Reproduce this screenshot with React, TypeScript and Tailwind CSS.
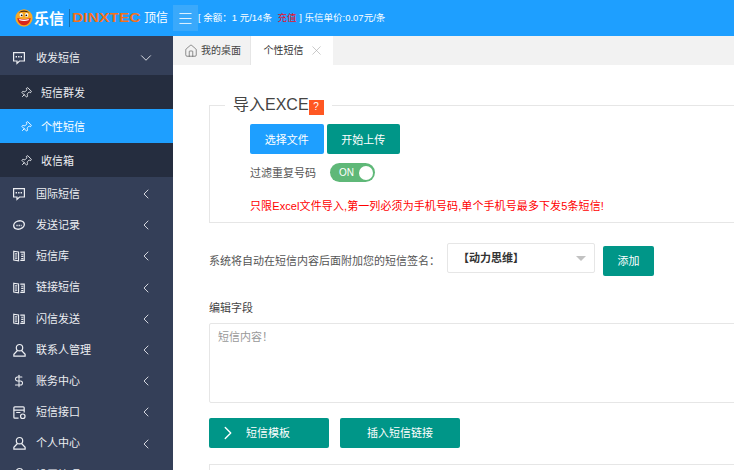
import { ChevronDown, ChevronLeft, ChevronRight, DollarSign, House, Menu, Pin, X } from 'lucide-react'
import type { ReactNode } from 'react'

const font = "font-['Liberation_Sans','Noto_Sans_CJK_SC',sans-serif]"

const MsgIcon = () => (
  <svg viewBox="0 0 14 14" className="h-[14px] w-[14px]" fill="none" stroke="currentColor" strokeWidth="1.2">
    <path d="M1.6 1.6 H12.4 V10 H7.5 L5 12.4 V10 H1.6 Z" />
    <path d="M3.6 5.8 H10.4" strokeWidth="1.5" strokeDasharray="1.4 1.1" />
  </svg>
)

const BookIcon = () => (
  <svg viewBox="0 0 16 16" className="h-[14px] w-[14px]" fill="none" stroke="currentColor" strokeWidth="1.3">
    <path d="M2 2.5 L7.5 3.5 V13.5 L2 12.5 Z" />
    <path d="M9.5 3.5 H14 V13 H9.5" />
    <path d="M3.5 5.5 H6 M3.5 8 H6 M3.5 10.5 H6 M10.5 6 H13 M10.5 8.5 H13 M10.5 11 H13" />
  </svg>
)

const OrbitIcon = () => (
  <svg viewBox="0 0 16 16" className="h-[14px] w-[14px]" fill="none" stroke="currentColor" strokeWidth="1.6">
    <ellipse cx="8" cy="8" rx="6.2" ry="4.6" transform="rotate(-18 8 8)" />
    <path d="M5 8.6 H11" strokeWidth="1.6" strokeDasharray="1.5 1" />
  </svg>
)

const ApiIcon = () => (
  <svg viewBox="0 0 16 16" className="h-[15px] w-[15px]" fill="none" stroke="currentColor" strokeWidth="1.3">
    <path d="M7 14 H3 a1 1 0 0 1 -1 -1 V3 a1 1 0 0 1 1 -1 H12 a1 1 0 0 1 1 1 V8" />
    <path d="M2 5.5 H13 M4.5 8 H9" />
    <circle cx="11.5" cy="12" r="2.4" />
  </svg>
)

const UserIcon = () => (
  <svg viewBox="0 0 16 16" className="h-[15px] w-[15px]" fill="none" stroke="currentColor" strokeWidth="1.3">
    <circle cx="8" cy="5" r="3.4" />
    <path d="M5.8 8 L2 12 V14 H14 V12 L10.2 8" />
  </svg>
)

const Logo = () => (
  <svg viewBox="0 0 20 20" className="h-[18px] w-[18px] shrink-0">
    <circle cx="10" cy="10" r="9.6" fill="#f7a823" />
    <path d="M4 4.2 A8.6 8.6 0 0 1 16 4.2 Q10 1.8 4 4.2 Z" fill="#4a2a10" />
    <ellipse cx="7" cy="6.6" rx="1.9" ry="2.2" fill="#fff" />
    <ellipse cx="13" cy="6.6" rx="1.9" ry="2.2" fill="#fff" />
    <circle cx="7.4" cy="7" r="1" fill="#111" />
    <circle cx="12.6" cy="7" r="1" fill="#111" />
    <path d="M2.5 10 Q10 12.5 17.5 10 Q16.5 18 10 18 Q3.5 18 2.5 10 Z" fill="#d9261c" />
    <path d="M4.5 11 Q10 12.8 15.5 11 L15 12.6 Q10 14 5 12.6 Z" fill="#fff" />
  </svg>
)

const groups: { label: string; icon: ReactNode }[] = [
  { label: '国际短信', icon: <MsgIcon /> },
  { label: '发送记录', icon: <OrbitIcon /> },
  { label: '短信库', icon: <BookIcon /> },
  { label: '链接短信', icon: <BookIcon /> },
  { label: '闪信发送', icon: <BookIcon /> },
  { label: '联系人管理', icon: <UserIcon /> },
  { label: '账务中心', icon: <DollarSign size={14} strokeWidth={1.8} /> },
  { label: '短信接口', icon: <ApiIcon /> },
  { label: '个人中心', icon: <UserIcon /> },
  { label: '设置管理', icon: <UserIcon /> },
]

const subItems = ['短信群发', '个性短信', '收信箱']

const App = () => {
  return (
    <div className={`${font} flex h-[470px] w-[734px] flex-col overflow-hidden bg-white text-[11px] text-[#555]`}>
      <header className="flex h-9 shrink-0 items-center bg-[#1e9fff] text-white">
        <div className="flex w-[173px] shrink-0 items-center pl-[15px]">
          <Logo />
          <span className="ml-[1px] text-[15px] font-bold leading-none">乐信</span>
          <span className="ml-[5px] h-[18px] w-px bg-[#176fae]" />
          <span className="ml-[2px] inline-block w-[70px] origin-left scale-x-[1.25] text-[12.5px] font-bold leading-none text-[#f5711c]">DINXTEC</span>
          <span className="ml-[2px] text-[12px] leading-none">顶信</span>
        </div>
        <div className="flex h-[26px] w-[25px] items-center justify-center bg-[#3aa9fb]">
          <Menu size={17} strokeWidth={1.2} />
        </div>
        <div className="whitespace-nowrap text-[9.5px]">
          [ 余额：1 元/14条 <span className="ml-[3px] text-[#e8112d]">充值</span> ] 乐信单价:0.07元/条
        </div>
      </header>

      <div className="flex min-h-0 flex-1">
        <aside className="w-[173px] shrink-0 overflow-hidden bg-[#343f58] text-[#eceef2]">
          <div className="flex h-[39px] items-center pl-3 pr-[18px] pt-[5px]">
            <span className="flex w-6 justify-start"><MsgIcon /></span>
            <span className="flex-1">收发短信</span>
            <ChevronDown size={18} strokeWidth={1.2} />
          </div>
          <ul className="bg-[#252d3f]">
            {subItems.map((item) => (
              <li key={item} className={`flex h-[34px] items-center pl-5 pt-[2px] ${item === '个性短信' ? 'bg-[#1e9fff] text-white' : ''}`}>
                <Pin size={12} strokeWidth={1.8} className="mr-[9px] rotate-45" />
                {item}
              </li>
            ))}
          </ul>
          <ul className="pt-[0.5px]">
            {groups.map((g) => (
              <li key={g.label} className="flex h-[31.2px] items-center pl-3 pr-[19px] pt-[2px]">
                <span className="flex w-6 justify-start">{g.icon}</span>
                <span className="flex-1">{g.label}</span>
                <ChevronLeft size={16} strokeWidth={1.3} />
              </li>
            ))}
          </ul>
        </aside>

        <main className="min-w-0 flex-1 overflow-hidden">
          <div className="flex h-[29px] items-end bg-[#f2f2f2] pl-[2px]">
            <div className="flex h-[29px] w-[76px] items-center justify-center gap-[3px] border-r border-[#e6e6e6] text-[10px] text-[#444]">
              <House size={14} strokeWidth={1} />
              我的桌面
            </div>
            <div className="flex h-[29px] w-[82px] items-center justify-center gap-[5px] bg-white pl-[3px] text-[10px] text-[#333]">
              个性短信
              <X size={15} strokeWidth={1} className="text-[#aaa]" />
            </div>
          </div>

          <div className="w-[600px] pl-9 pt-[30px]">
            <fieldset className="h-[128px] border border-r-0 border-[#e6e6e6] pl-10">
              <legend className="-ml-[25px] flex h-[20px] items-center px-2 text-[16px] leading-none text-[#444]">
                导入EXCE
                <span className="flex h-[15px] w-[15px] translate-y-[2px] items-center justify-center bg-[#ff5722] text-[10px] text-white">?</span>
              </legend>
              <div className="mt-[9px] flex gap-[3px]">
                <button className="h-[30px] w-[73.5px] rounded-[2px] bg-[#1e9fff] pt-[2px] text-white">选择文件</button>
                <button className="h-[30px] w-[73.5px] rounded-[2px] bg-[#009688] pt-[2px] text-white">开始上传</button>
              </div>
              <div className="mt-[9px] flex items-center">
                <span className="w-[80px] pt-[2px] text-[#555]">过滤重复号码</span>
                <span className="flex h-[19px] w-[45px] items-center justify-between rounded-full bg-[#5fb878] pl-[9px] pr-[2px] text-[10px] text-white">
                  ON
                  <span className="h-[14px] w-[14px] rounded-full bg-white" />
                </span>
              </div>
              <p className="mt-[16px] whitespace-nowrap tracking-[0.1px] text-[#ff0000]">只限Excel文件导入,第一列必须为手机号码,单个手机号最多下发5条短信!</p>
            </fieldset>
          </div>

          <div className="pl-9">
            <div className="mt-[20px] flex items-start">
              <span className="mt-[10px] w-[238px] whitespace-nowrap">系统将自动在短信内容后面附加您的短信签名：</span>
              <div className="flex h-[30px] w-[148px] items-center justify-between rounded-[2px] border border-[#e6e6e6] pl-[10px] pr-[8px] text-[#333]">
                <span className="font-bold">【动力思维】</span>
                <span className="h-0 w-0 border-x-[5px] border-t-[5px] border-x-transparent border-t-[#c2c2c2]" />
              </div>
              <button className="ml-2 mt-[3px] h-[30px] w-[51px] rounded-[2px] bg-[#009688] text-white">添加</button>
            </div>
            <div className="mt-[24px] text-[#444]">编辑字段</div>
            <div className="mt-[6px] h-[80px] w-[600px] rounded-[2px] border border-[#e6e6e6] px-2 py-[5px] text-[#999]">短信内容！</div>
            <div className="mt-[15px] flex gap-[11px]">
              <button className="flex h-[30px] w-[120px] items-center rounded-[2px] bg-[#009688] pl-[8px] text-white">
                <ChevronRight size={22} strokeWidth={1.5} className="mr-[7px]" />
                <span className="pt-[2px]">短信模板</span>
              </button>
              <button className="h-[30px] w-[120px] rounded-[2px] bg-[#009688] pt-[2px] text-white">插入短信链接</button>
            </div>
            <div className="mt-[16px] h-[40px] w-[600px] border border-[#e6e6e6]" />
          </div>
        </main>
      </div>
    </div>
  )
}

export default App
